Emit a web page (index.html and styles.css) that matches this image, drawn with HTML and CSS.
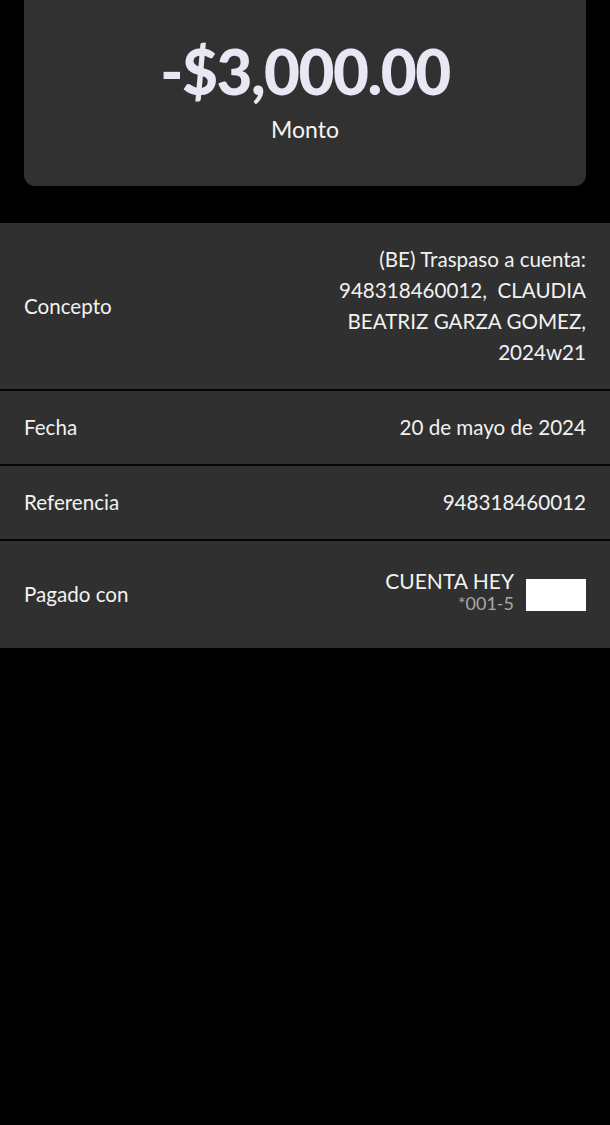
FILE: index.html
```html
<!DOCTYPE html>
<html lang="es">
<head>
<meta charset="utf-8">
<link rel="stylesheet" href="styles.css">
</head>
<body>
  <div class="top">
    <div class="card">
      <div class="amount">-$3,000.00</div>
      <div class="amount-label">Monto</div>
    </div>
  </div>
  <div class="list">
    <div class="row row-concepto">
      <div class="label">Concepto</div>
      <div class="value">(BE) Traspaso a cuenta:<br>948318460012,&nbsp; CLAUDIA<br>BEATRIZ GARZA GOMEZ,<br>2024w21</div>
    </div>
    <div class="row">
      <div class="label">Fecha</div>
      <div class="value">20 de mayo de 2024</div>
    </div>
    <div class="row">
      <div class="label">Referencia</div>
      <div class="value">948318460012</div>
    </div>
    <div class="row row-pay">
      <div class="label">Pagado con</div>
      <div class="pay">
        <div class="pay-text">
          <div class="pay-name">CUENTA HEY</div>
          <div class="pay-num">*001-5</div>
        </div>
        <div class="pay-card"></div>
      </div>
    </div>
  </div>
</body>
</html>
```

FILE: styles.css
```css
html, body {
  margin: 0;
  padding: 0;
  background: #000;
}
body {
  font-family: Lato, "Noto Sans", sans-serif;
  color: #f2f2f2;
  width: 610px;
  min-height: 1125px;
}
.top {
  padding: 0 24px 37px;
}
.card {
  background: #313131;
  border-radius: 0 0 11px 11px;
  height: 186px;
  box-sizing: border-box;
  padding-top: 36px;
  display: flex;
  flex-direction: column;
  align-items: center;
}
.amount {
  font-size: 62px;
  font-weight: 900;
  color: #e8e8f4;
  line-height: 70px;
  letter-spacing: -1.5px;
}
.amount-label {
  font-size: 23px;
  line-height: 30px;
  margin-top: 8px;
  color: #f4f4f4;
}
.list {
  display: flex;
  flex-direction: column;
  gap: 2px;
  background: #050505;
}
.row {
  background: #303030;
  display: flex;
  justify-content: space-between;
  align-items: center;
  padding: 21px 24px;
  font-size: 20.6px;
  line-height: 31px;
}
.value {
  text-align: right;
}
.row-pay {
  padding: 31px 24px;
  height: 107px;
  box-sizing: border-box;
}
.pay {
  display: flex;
  align-items: center;
  gap: 12px;
}
.pay-text {
  text-align: right;
  padding-bottom: 8px;
}
.pay-name {
  font-size: 21px;
  line-height: 24px;
}
.pay-num {
  font-size: 18px;
  line-height: 20px;
  color: #a9a9a9;
}
.pay-card {
  width: 60px;
  height: 32px;
  background: #fff;
}
```
